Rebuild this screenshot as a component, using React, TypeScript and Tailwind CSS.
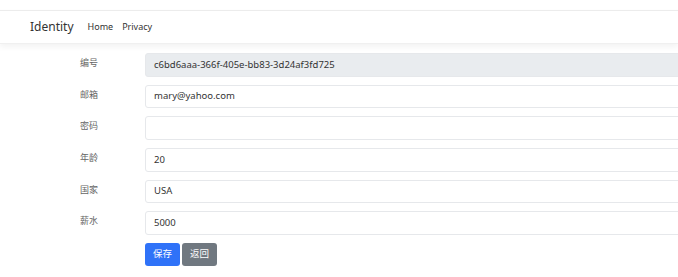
import React from "react";

const font = { fontFamily: '"Noto Sans", "Noto Sans CJK SC", sans-serif' };

const rows: { label: string; value: string; disabled?: boolean }[] = [
  { label: "编号", value: "c6bd6aaa-366f-405e-bb83-3d24af3fd725", disabled: true },
  { label: "邮箱", value: "mary@yahoo.com" },
  { label: "密码", value: "" },
  { label: "年龄", value: "20" },
  { label: "国家", value: "USA" },
  { label: "薪水", value: "5000" },
];

export default function App() {
  return (
    <div className="w-[678px] h-[277px] overflow-hidden bg-white text-[#212529]" style={font}>
      <div className="mt-[10px] h-[34px] border-t border-[#ececec] border-b border-b-[#f0f0f0] shadow-[0_3px_6px_rgba(0,0,0,0.05)] flex items-center pl-[30px]">
        <span className="text-[12px] text-[#333]">Identity</span>
        <span className="ml-[14px] text-[9px] text-[#333]">Home</span>
        <span className="ml-[9px] text-[9px] text-[#333]">Privacy</span>
      </div>
      <div className="mt-[9px] flex flex-col gap-[8px]">
        {rows.map((r) => (
          <div key={r.label} className="flex h-[23.67px]">
            <div className="w-[145px] shrink-0 pl-[80px] pt-[3px] text-[9px] text-[#666] leading-[14px]">{r.label}</div>
            <div
              className={`w-[600px] shrink-0 h-full rounded-[3px] border border-[#e6e8eb] flex items-center pl-[8px] text-[9.5px] text-[#333] ${
                r.disabled ? "bg-[#e9ecef]" : "bg-white"
              }`}
            >
              {r.value}
            </div>
          </div>
        ))}
        <div className="flex pl-[145px] gap-[2px]">
          <div className="w-[35px] h-[23px] rounded-[3px] bg-[#2f72f8] text-white text-[9.5px] flex items-center justify-center">保存</div>
          <div className="w-[35px] h-[23px] rounded-[3px] bg-[#707880] text-white text-[9.5px] flex items-center justify-center">返回</div>
        </div>
      </div>
    </div>
  );
}
